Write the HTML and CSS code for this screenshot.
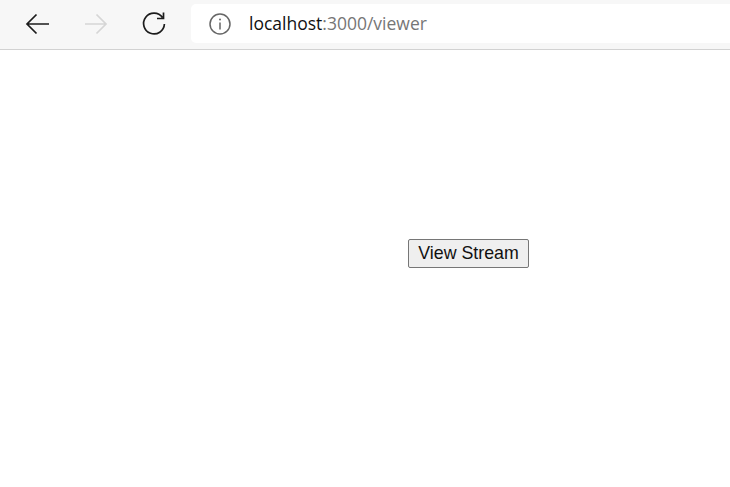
FILE: index.html
```html
<!DOCTYPE html>
<html lang="en">
<head>
<meta charset="utf-8">
<title>Viewer</title>
<link rel="stylesheet" href="styles.css">
</head>
<body>
<header class="toolbar">
  <nav class="nav-buttons">
    <svg class="icon" width="28" height="28" viewBox="0 0 28 28"><path d="M25 14H3M12.500 4.500L3 14l9.500 9.500" class="stroke"/></svg>
    <svg class="icon icon-off" width="28" height="28" viewBox="0 0 28 28"><path d="M3 14h21M14.500 4.500L24 14l-9.500 9.500" class="stroke"/></svg>
    <svg class="icon" width="28" height="28" viewBox="0 0 28 28"><path d="M22.500 7.500A10.400 10.400 0 1 0 24.400 14M23.500 2.500v6h-6.500" class="stroke"/></svg>
  </nav>
  <div class="address">
    <svg class="info" width="24" height="24" viewBox="0 0 24 24"><circle cx="12" cy="12" r="10" class="info-line"/><path d="M12 10.500v7" class="info-line"/><circle cx="12" cy="7.400" r="1" class="info-dot"/></svg>
    <span class="url"><span class="host">localhost</span>:3000/viewer</span>
  </div>
</header>
<main class="content">
  <button class="stream" type="button">View Stream</button>
</main>
</body>
</html>
```

FILE: styles.css
```css
* { box-sizing: border-box; }
html, body { margin: 0; height: 100%; background: #fff; overflow: hidden; }
.toolbar {
  display: flex;
  height: 50px;
  padding: 4px 0 6px 0;
  background: #f7f7f7;
  border-bottom: 1px solid #d2d2d2;
}
.nav-buttons {
  display: flex;
  align-items: center;
  gap: 30px;
  width: 191px;
  padding-left: 24px;
}
.icon { flex: none; }
.stroke { fill: none; stroke: #1c1c1c; stroke-width: 1.7; }
.icon-off .stroke { stroke: #d6d6d6; }
.address {
  flex: 1;
  display: flex;
  align-items: center;
  margin-right: -8px;
  padding-left: 17px;
  background: #fff;
  border-radius: 5px;
}
.info { flex: none; }
.info-line { fill: none; stroke: #666; stroke-width: 1.5; }
.info-dot { fill: #666; }
.url {
  margin: 0 0 2px 17px;
  font: 17.5px "Open Sans", sans-serif;
  color: #767676;
  white-space: nowrap;
}
.host { color: #111; }
.content { padding: 189px 0 0 408px; }
.stream {
  display: block;
  width: 121px;
  height: 29px;
  padding: 0;
  font: 17.8px "Liberation Sans", Arial, sans-serif;
  color: #111;
  background: #efefef;
  border: 1px solid #767676;
  border-radius: 2px;
}
```
